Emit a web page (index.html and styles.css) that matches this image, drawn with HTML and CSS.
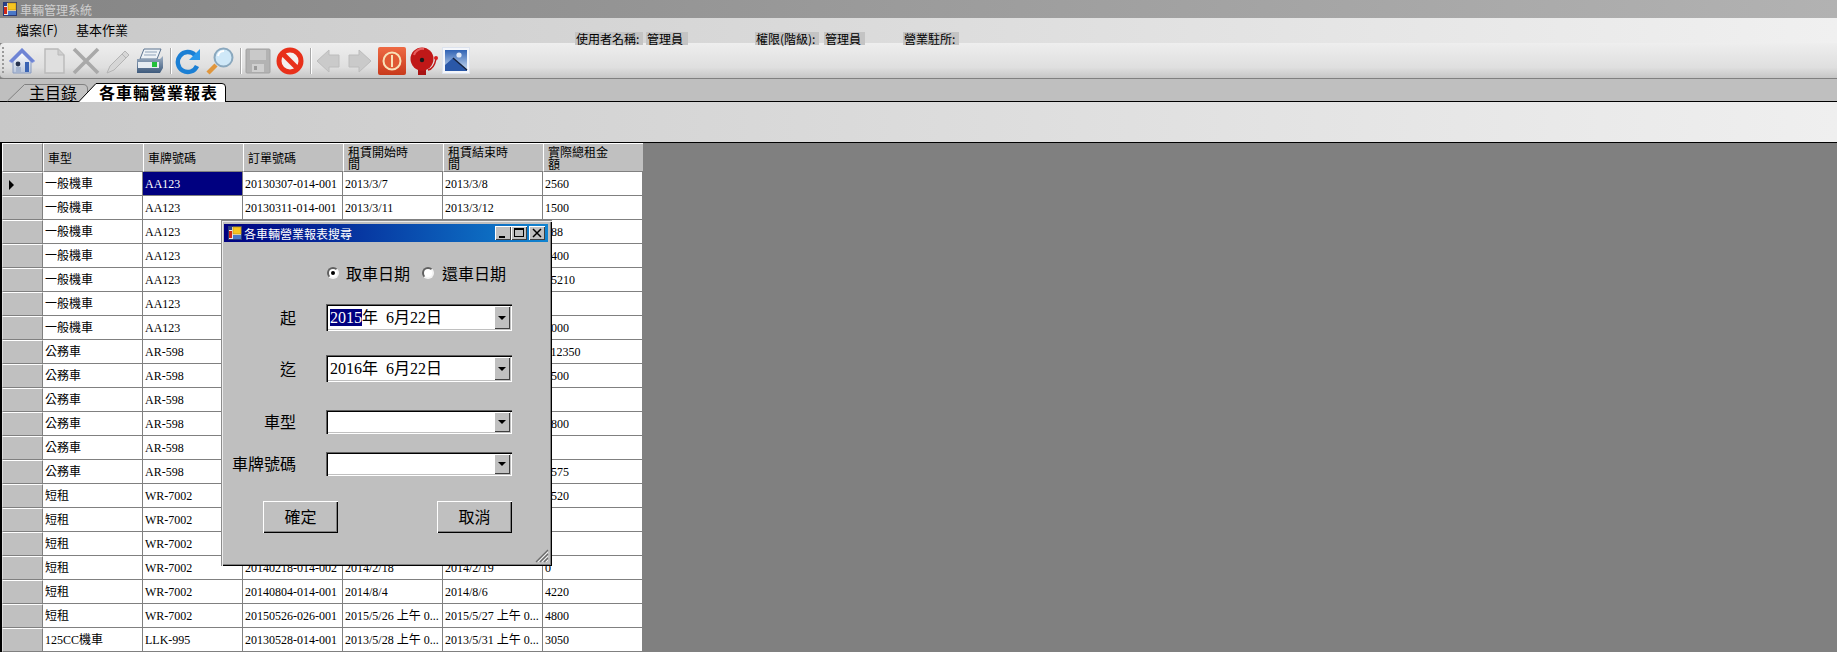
FILE: index.html
```html
<!DOCTYPE html>
<html lang="zh-Hant">
<head>
  <meta charset="UTF-8">
  <title>車輛管理系統</title>
  <link rel="stylesheet" href="styles.css">
</head>
<body>

  <svg class="defs" width="0" height="0">
    <defs>
      <symbol id="appIcon" viewBox="0 0 14 14">
        <rect x="0.5" y="0.5" width="13" height="13" fill="#e8e8e8" stroke="#2a3a78"/>
        <rect x="5" y="1" width="8" height="7" fill="#f6c521" stroke="#b88a10" stroke-width="0.6"/>
        <rect x="1" y="5" width="3" height="7" fill="#d02818"/>
        <rect x="5" y="9" width="8" height="4" fill="#4a78c8"/>
        <rect x="1" y="1" width="3" height="3" fill="#28408c"/>
      </symbol>
    </defs>
  </svg>

  <div class="titlebar">
    <svg class="app-icon"><use href="#appIcon"/></svg>
    <span>車輛管理系統</span>
  </div>

  <div class="menubar">
    <span class="menu-item menu-file">檔案(F)</span>
    <span class="menu-item menu-basic">基本作業</span>
    <span class="info info-user">使用者名稱:</span>
    <span class="info info-name">管理員</span>
    <span class="info info-role">權限(階級):</span>
    <span class="info info-name2">管理員</span>
    <span class="info info-site">營業駐所:</span>
  </div>

  <div class="toolbar">
    <div class="gripper"></div>
    <div class="tool">
      <svg viewBox="0 0 28 28">
        <defs><linearGradient id="homeWall" x1="0" y1="0" x2="0" y2="1"><stop offset="0" stop-color="#fff"/><stop offset="1" stop-color="#b9c6dc"/></linearGradient></defs>
        <path d="M5 13 L14 5 L23 13 V26 H5 Z" fill="url(#homeWall)" stroke="#8a9cc0"/>
        <path d="M14 1 L27 14 L24 16 L14 6 L4 16 L1 14 Z" fill="#6e84d4" stroke="#9aaae0" stroke-width="0.6"/>
        <rect x="17" y="15" width="4" height="10" fill="#3a64b4"/>
        <circle cx="10" cy="17" r="2.4" fill="#26324e"/>
        <rect x="8" y="20" width="5" height="5" fill="#a4b4d0"/>
      </svg>
    </div>
    <div class="tool">
      <svg viewBox="0 0 28 28">
        <path d="M5 2 H18 L24 8 V26 H5 Z" fill="#dfdfdf" stroke="#b9b9b9" stroke-width="1.4"/>
        <path d="M18 2 V8 H24" fill="#cfcfcf" stroke="#b9b9b9"/>
      </svg>
    </div>
    <div class="tool">
      <svg viewBox="0 0 28 28">
        <path d="M2 2 L26 26 M26 2 L2 26" stroke="#a9a9a9" stroke-width="3.6" fill="none"/>
      </svg>
    </div>
    <div class="tool">
      <svg viewBox="0 0 28 28">
        <path d="M6 19 L21 4 L25 8 L10 23 L3 26 Z" fill="#d6d6d6" stroke="#b4b4b4"/>
        <path d="M18 7 L22 11" stroke="#b4b4b4" fill="none"/>
      </svg>
    </div>
    <div class="tool">
      <svg viewBox="0 0 28 28">
        <defs><linearGradient id="printerBody" x1="0" y1="0" x2="0" y2="1"><stop offset="0" stop-color="#9fb0c4"/><stop offset="1" stop-color="#3e5a7c"/></linearGradient></defs>
        <path d="M8 2 H25 L21 12 H4 Z" fill="#eef2f6" stroke="#5d7490"/>
        <path d="M9 5 H21 M8 8 H20" stroke="#8fa2b8" fill="none"/>
        <path d="M1 12 H24 L27 9 V21 L24 26 H1 Z" fill="url(#printerBody)"/>
        <rect x="2" y="15" width="21" height="6" fill="#e6ecf2"/>
        <rect x="16" y="15" width="5" height="5" fill="#22c03a"/>
      </svg>
    </div>
    <div class="sep"></div>
    <div class="tool">
      <svg viewBox="0 0 28 28">
        <path d="M21 8 A10 10 0 1 0 23 19" fill="none" stroke="#1b7fd4" stroke-width="4.4"/>
        <path d="M26 2 V13 H15 Z" fill="#2a98ea"/>
      </svg>
    </div>
    <div class="tool">
      <svg viewBox="0 0 28 28">
        <path d="M10 18 L2 26" stroke="#e0963c" stroke-width="4.4" fill="none"/>
        <circle cx="17.500" cy="10.500" r="9" fill="#cfe8f8" stroke="#8aa8be" stroke-width="2"/>
        <path d="M12 9 A6 6 0 0 1 18 4" stroke="#fff" stroke-width="2" fill="none"/>
      </svg>
    </div>
    <div class="sep"></div>
    <div class="tool">
      <svg viewBox="0 0 28 28">
        <rect x="2" y="2" width="24" height="24" rx="1" fill="#b3b3b3" stroke="#a2a2a2"/>
        <rect x="6" y="3" width="16" height="10" fill="#c9c9c9"/>
        <rect x="8" y="17" width="12" height="8" fill="#cfcfcf"/>
        <rect x="10" y="19" width="3" height="4" fill="#9a9a9a"/>
      </svg>
    </div>
    <div class="tool">
      <svg viewBox="0 0 28 28">
        <circle cx="14" cy="14" r="11" fill="#f4f0ee" stroke="#e8301a" stroke-width="5"/>
        <path d="M6 6 L22 22" stroke="#e8301a" stroke-width="5" fill="none"/>
      </svg>
    </div>
    <div class="sep"></div>
    <div class="tool">
      <svg viewBox="0 0 28 28">
        <path d="M3 14 L15 3 V8 H25 V20 H15 V25 Z" fill="#cacaca" stroke="#bcbcbc"/>
      </svg>
    </div>
    <div class="tool">
      <svg viewBox="0 0 28 28">
        <path d="M25 14 L13 3 V8 H3 V20 H13 V25 Z" fill="#cacaca" stroke="#bcbcbc"/>
      </svg>
    </div>
    <div class="tool">
      <svg viewBox="0 0 28 28">
        <defs><linearGradient id="powerBg" x1="0" y1="0" x2="0" y2="1"><stop offset="0" stop-color="#ee6a44"/><stop offset="1" stop-color="#c83a1c"/></linearGradient></defs>
        <rect width="28" height="28" rx="2" fill="url(#powerBg)"/>
        <circle cx="14" cy="14" r="8.500" fill="#e05a34" stroke="#f8e2b8" stroke-width="2"/>
        <path d="M14 8 V20" stroke="#f8e2b8" stroke-width="2" fill="none"/>
      </svg>
    </div>
    <div class="tool">
      <svg viewBox="0 0 28 28">
        <path d="M18 23 Q24 22 26 12" stroke="#c01818" stroke-width="1.400" fill="none"/>
        <circle cx="26" cy="11" r="2" fill="#d82020"/>
        <rect x="8" y="22" width="8" height="6" fill="#a81414"/>
        <circle cx="12" cy="12" r="11.500" fill="#c01818"/>
        <path d="M4 8 A9 9 0 0 1 14 2" stroke="#e86060" stroke-width="2" fill="none"/>
        <circle cx="12" cy="13" r="2.200" fill="#1a1a1a"/>
      </svg>
    </div>
    <div class="tool">
      <svg viewBox="0 0 28 28">
        <defs><linearGradient id="picSky" x1="0" y1="0" x2="0" y2="1"><stop offset="0" stop-color="#2f62b4"/><stop offset="1" stop-color="#cfe0f4"/></linearGradient></defs>
        <rect x="0.500" y="0.500" width="27" height="26" fill="#f4f6fa" stroke="#dde3ee"/>
        <rect x="3" y="3" width="22" height="21" fill="url(#picSky)"/>
        <circle cx="17" cy="8" r="2.600" fill="#dfe8f6"/>
        <path d="M3 18 L11 11 L18 17 L25 23 V24 H3 Z" fill="#2a58a8"/>
        <path d="M11 11 L18 17 L25 23" stroke="#14213c" stroke-width="1.400" fill="none"/>
      </svg>
    </div>
  </div>

  <div class="tabstrip">
    <div class="tab tab-home">
      <svg class="tab-shape" width="82" height="23" viewBox="0 0 82 23">
        <path d="M0.500 22 L17.500 5.500 H76 Q80.500 5.500 80.500 10 V18" fill="#c2c2c2" stroke="#808080"/>
      </svg>
      <span class="tab-text">主目錄</span>
    </div>
    <div class="tab tab-active">
      <svg class="tab-shape" width="149" height="23" viewBox="0 0 149 23">
        <path d="M0.500 23 L18 4.500 H144 Q147.500 4.500 147.500 8 V23 Z" fill="#fff"/>
        <path d="M0.500 23 L18 4.500 H144 Q147.500 4.500 147.500 8 V23" fill="none" stroke="#000"/>
      </svg>
      <span class="tab-text">各車輛營業報表</span>
    </div>
  </div>

  <div class="panel"></div>

  <div class="grid-area">
    <table class="grid">
      <colgroup>
        <col class="col-head">
        <col class="col-data"><col class="col-data"><col class="col-data">
        <col class="col-data"><col class="col-data"><col class="col-data">
      </colgroup>
      <thead>
        <tr>
          <th></th><th>車型</th><th>車牌號碼</th><th>訂單號碼</th>
          <th>租賃開始時間</th><th>租賃結束時間</th><th>實際總租金額</th>
        </tr>
      </thead>
      <tbody>
        <tr><th class="current"></th><td>一般機車</td><td class="selected">AA123</td><td>20130307-014-001</td><td>2013/3/7</td><td>2013/3/8</td><td>2560</td></tr>
        <tr><th></th><td>一般機車</td><td>AA123</td><td>20130311-014-001</td><td>2013/3/11</td><td>2013/3/12</td><td>1500</td></tr>
        <tr><th></th><td>一般機車</td><td>AA123</td><td></td><td></td><td></td><td>388</td></tr>
        <tr><th></th><td>一般機車</td><td>AA123</td><td></td><td></td><td></td><td>1400</td></tr>
        <tr><th></th><td>一般機車</td><td>AA123</td><td></td><td></td><td></td><td>15210</td></tr>
        <tr><th></th><td>一般機車</td><td>AA123</td><td></td><td></td><td></td><td>0</td></tr>
        <tr><th></th><td>一般機車</td><td>AA123</td><td></td><td></td><td></td><td>2000</td></tr>
        <tr><th></th><td>公務車</td><td>AR-598</td><td></td><td></td><td></td><td>112350</td></tr>
        <tr><th></th><td>公務車</td><td>AR-598</td><td></td><td></td><td></td><td>1500</td></tr>
        <tr><th></th><td>公務車</td><td>AR-598</td><td></td><td></td><td></td><td>0</td></tr>
        <tr><th></th><td>公務車</td><td>AR-598</td><td></td><td></td><td></td><td>1800</td></tr>
        <tr><th></th><td>公務車</td><td>AR-598</td><td></td><td></td><td></td><td>0</td></tr>
        <tr><th></th><td>公務車</td><td>AR-598</td><td></td><td></td><td></td><td>1575</td></tr>
        <tr><th></th><td>短租</td><td>WR-7002</td><td></td><td></td><td></td><td>1520</td></tr>
        <tr><th></th><td>短租</td><td>WR-7002</td><td></td><td></td><td></td><td>0</td></tr>
        <tr><th></th><td>短租</td><td>WR-7002</td><td></td><td></td><td></td><td>0</td></tr>
        <tr><th></th><td>短租</td><td>WR-7002</td><td>20140218-014-002</td><td>2014/2/18</td><td>2014/2/19</td><td>0</td></tr>
        <tr><th></th><td>短租</td><td>WR-7002</td><td>20140804-014-001</td><td>2014/8/4</td><td>2014/8/6</td><td>4220</td></tr>
        <tr><th></th><td>短租</td><td>WR-7002</td><td>20150526-026-001</td><td>2015/5/26 上午 0...</td><td>2015/5/27 上午 0...</td><td>4800</td></tr>
        <tr><th></th><td>125CC機車</td><td>LLK-995</td><td>20130528-014-001</td><td>2013/5/28 上午 0...</td><td>2013/5/31 上午 0...</td><td>3050</td></tr>
      </tbody>
    </table>
  </div>

  <div class="dialog">
    <div class="dialog-title">
      <svg class="dialog-icon"><use href="#appIcon"/></svg>
      <span class="dialog-name">各車輛營業報表搜尋</span>
      <div class="win-btn">
        <svg width="16" height="14" viewBox="0 0 16 14"><rect x="4" y="10" width="6" height="2" fill="#000"/></svg>
      </div>
      <div class="win-btn">
        <svg width="16" height="14" viewBox="0 0 16 14"><rect x="3.500" y="2.500" width="9" height="8" fill="none" stroke="#000"/><rect x="3" y="2" width="10" height="2" fill="#000"/></svg>
      </div>
      <div class="win-btn win-close">
        <svg width="16" height="14" viewBox="0 0 16 14"><path d="M4 3 L12 11 M12 3 L4 11" stroke="#000" stroke-width="1.500" fill="none"/></svg>
      </div>
    </div>

    <div class="radio-row">
      <span class="radio radio-on"></span>
      <span class="radio-text">取車日期</span>
      <span class="radio"></span>
      <span class="radio-text">還車日期</span>
    </div>

    <div class="field-row row-start">
      <span class="field-label">起</span>
      <div class="field field-date">
        <span class="field-value"><span class="field-sel">2015</span>年&nbsp;&nbsp;6月22日</span>
        <div class="drop"></div>
      </div>
    </div>
    <div class="field-row row-end">
      <span class="field-label">迄</span>
      <div class="field field-date">
        <span class="field-value">2016年&nbsp;&nbsp;6月22日</span>
        <div class="drop"></div>
      </div>
    </div>
    <div class="field-row row-type">
      <span class="field-label">車型</span>
      <div class="field field-combo"><span class="field-value"></span><div class="drop"></div></div>
    </div>
    <div class="field-row row-plate">
      <span class="field-label">車牌號碼</span>
      <div class="field field-combo"><span class="field-value"></span><div class="drop"></div></div>
    </div>

    <div class="button-row">
      <button class="dlg-btn">確定</button>
      <button class="dlg-btn">取消</button>
    </div>

    <svg class="grip" width="14" height="14" viewBox="0 0 14 14">
      <path d="M13 1 L1 13 M13 5 L5 13 M13 9 L9 13" stroke="#6a6a6a" stroke-width="1.200" fill="none"/>
      <path d="M13 3 L3 13 M13 7 L7 13 M13 11 L11 13" stroke="#f0f0f0" fill="none"/>
    </svg>
  </div>

</body>
</html>
```

FILE: styles.css
```css
html, body {
  margin: 0;
  height: 652px;
  overflow: hidden;
  background: #808080;
  font-family: "Liberation Serif", "Noto Sans CJK TC", serif;
  font-size: 12px;
  color: #000;
}
.defs {
  display: block;
  height: 0;
}

/* top bars */
.titlebar {
  display: flex;
  align-items: center;
  height: 18px;
  padding-left: 3px;
  background: linear-gradient(to right, #858585, #b2b2b2);
  color: #cfcfcf;
  font-family: "Noto Sans CJK TC", sans-serif;
}
.app-icon {
  width: 14px;
  height: 14px;
  margin-right: 3px;
}
.menubar {
  display: flex;
  height: 25px;
  background: linear-gradient(to right, #c8c8c8, #f0f0f0);
  font-family: "Noto Sans CJK TC", sans-serif;
}
.menu-item {
  font-size: 13px;
  line-height: 24px;
}
.menu-file {
  margin-left: 16px;
  width: 60px;
}
.menu-basic {
  width: 499px;
}
.info {
  position: relative;
  z-index: 1;
  align-self: flex-end;
  height: 13px;
  margin-bottom: -2px;
  padding: 0 1px;
  background: #c4c4c4;
  line-height: 13px;
  white-space: nowrap;
}
.info-user { width: 66px; }
.info-name { width: 40px; margin-left: 3px; }
.info-role { width: 62px; margin-left: 67px; }
.info-name2 { width: 39px; margin-left: 5px; }
.info-site { width: 54px; margin-left: 38px; }

.toolbar {
  display: flex;
  align-items: center;
  height: 35px;
  padding-left: 6px;
  position: relative;
  border-radius: 4px 0 0 4px;
  background: linear-gradient(to bottom, #eeeeee, #dfdfdf 70%, #c6c6c6);
  border-bottom: 1px solid #808080;
}
.gripper {
  position: absolute;
  left: 2px;
  top: 4px;
  width: 2px;
  height: 26px;
  background: repeating-linear-gradient(to bottom, #9a9a9a 0 2px, transparent 2px 4px);
}
.tool {
  display: flex;
  align-items: center;
  justify-content: center;
  width: 32px;
  height: 28px;
}
.tool svg {
  width: 28px;
  height: 28px;
}
.sep {
  width: 1px;
  height: 26px;
  margin-left: 4px;
  background: #a8a8a8;
  border-right: 1px solid #fff;
}

/* tabs */
.tabstrip {
  display: flex;
  height: 22px;
  padding-left: 7px;
  background: #bfbfbf;
  border-bottom: 1px solid #000;
  font-family: "Noto Sans CJK TC", sans-serif;
}
.tab {
  position: relative;
  height: 22px;
}
.tab-shape {
  position: absolute;
  left: 0;
  top: 0;
}
.tab-text {
  position: relative;
  font-size: 16px;
  line-height: 27px;
}
.tab-home {
  width: 71px;
  padding-left: 22px;
  box-sizing: border-box;
}
.tab-active {
  width: 148px;
  height: 23px;
  padding-left: 21px;
  box-sizing: border-box;
}
.tab-active .tab-text {
  font-weight: 700;
  letter-spacing: 1px;
}
.panel {
  height: 40px;
  background: linear-gradient(to right, #c8c8c8, #efefef);
  border-bottom: 1px solid #000;
}

/* data grid */
.grid-area {
  border-left: 2px solid #000;
  height: 509px;
}
.grid {
  border-collapse: separate;
  border-spacing: 0;
  table-layout: fixed;
  width: 641px;
  background: #fff;
}
.col-head { width: 41px; }
.col-data { width: 100px; }
.grid thead th {
  height: 29px;
  box-sizing: border-box;
  padding: 0 30px 0 4px;
  background: #c0c0c0;
  border-left: 1px solid #fff;
  border-top: 1px solid #fff;
  border-bottom: 1px solid #808080;
  font-family: "Noto Sans CJK TC", sans-serif;
  font-size: 12px;
  font-weight: 400;
  line-height: 12px;
  text-align: left;
  overflow: hidden;
}
.grid thead th:first-child {
  border-right: 1px solid #808080;
}
.grid tbody th {
  height: 24px;
  box-sizing: border-box;
  padding: 0;
  background: #c0c0c0;
  border-top: 1px solid #fff;
  border-left: 1px solid #dcdcdc;
  border-right: 1px solid #808080;
  border-bottom: 1px solid #808080;
}
.grid td {
  height: 24px;
  box-sizing: border-box;
  padding: 0 2px;
  border-right: 1px solid #808080;
  border-bottom: 1px solid #808080;
  line-height: 14px;
  white-space: nowrap;
  overflow: hidden;
}
.grid td.selected {
  background: #000080;
  color: #fff;
}
.current {
  position: relative;
}
.current::after {
  content: "";
  position: absolute;
  left: 6px;
  top: 7px;
  border-left: 5px solid #000;
  border-top: 5px solid transparent;
  border-bottom: 5px solid transparent;
}

/* search dialog */
.dialog {
  position: absolute;
  left: 221px;
  top: 220px;
  width: 331px;
  height: 346px;
  box-sizing: border-box;
  padding: 4px 4px 0 3px;
  background: #bfbfbf;
  box-shadow: inset 1px 1px 0 #8c8c8c, inset 2px 2px 0 #ececec, inset -1px -1px 0 #000, inset -2px -2px 0 #808080;
  font-family: "Liberation Serif", "Noto Sans CJK TC", serif;
}
.dialog-title {
  display: flex;
  align-items: center;
  height: 18px;
  padding: 0 3px 0 4px;
  background: linear-gradient(to right, #000080, #1084d0);
  color: #fff;
}
.dialog-icon {
  width: 14px;
  height: 14px;
  margin-right: 2px;
}
.dialog-name {
  flex: 1;
  font-family: "Noto Sans CJK TC", sans-serif;
}
.win-btn {
  width: 16px;
  height: 14px;
  background: #c0c0c0;
  box-shadow: inset 1px 1px 0 #fff, inset -1px -1px 0 #404040;
}
.win-btn svg {
  display: block;
}
.win-close {
  margin-left: 2px;
}
.radio-row {
  display: flex;
  align-items: center;
  height: 22px;
  margin-top: 20px;
  padding-left: 103px;
  font-family: "Noto Sans CJK TC", sans-serif;
  font-size: 16px;
}
.radio {
  position: relative;
  width: 12px;
  height: 12px;
  box-sizing: border-box;
  margin-right: 7px;
  border-radius: 50%;
  background: #fff;
  border: 2px solid;
  border-color: #606060 #f4f4f4 #f4f4f4 #606060;
}
.radio-on::after {
  content: "";
  position: absolute;
  left: 2px;
  top: 2px;
  width: 4px;
  height: 4px;
  border-radius: 50%;
  background: #000;
}
.radio-text {
  width: 76px;
  line-height: 22px;
}
.radio-text:last-child {
  width: auto;
}
.radio + .radio-text + .radio {
  margin-right: 8px;
}
.field-row {
  display: flex;
  align-items: center;
}
.row-start { margin-top: 20px; }
.row-end { margin-top: 24px; }
.row-type { margin-top: 28px; }
.row-plate { margin-top: 18px; }
.field-label {
  width: 72px;
  margin-right: 30px;
  padding-bottom: 2px;
  font-family: "Noto Sans CJK TC", sans-serif;
  font-size: 16px;
  line-height: 20px;
  text-align: right;
}
.field {
  display: flex;
  width: 186px;
  box-sizing: border-box;
  padding: 2px;
  background: #fff;
  box-shadow: inset 1px 1px 0 #606060, inset 2px 2px 0 #000, inset -1px -1px 0 #fff, inset -2px -2px 0 #c0c0c0;
}
.field-date { height: 27px; }
.field-combo { height: 24px; }
.field-value {
  flex: 1;
  padding-left: 2px;
  font-size: 16px;
  line-height: 23px;
  white-space: nowrap;
}
.field-sel {
  background: #000080;
  color: #fff;
}
.drop {
  position: relative;
  width: 16px;
  background: #c0c0c0;
  box-shadow: inset 1px 1px 0 #fff, inset -1px -1px 0 #404040;
}
.drop::after {
  content: "";
  position: absolute;
  left: 4px;
  top: 50%;
  margin-top: -2px;
  border-top: 4px solid #000;
  border-left: 4px solid transparent;
  border-right: 4px solid transparent;
}
.button-row {
  display: flex;
  justify-content: space-between;
  width: 249px;
  margin: 25px 0 0 39px;
}
.dlg-btn {
  width: 75px;
  height: 32px;
  padding: 0 0 2px;
  border: 0;
  background: #c0c0c0;
  box-shadow: inset 1px 1px 0 #fff, inset -1px -1px 0 #000, inset -2px -2px 0 #808080;
  font-family: "Noto Sans CJK TC", sans-serif;
  font-size: 16px;
  color: #000;
}
.grip {
  position: absolute;
  right: 3px;
  bottom: 3px;
}
```
